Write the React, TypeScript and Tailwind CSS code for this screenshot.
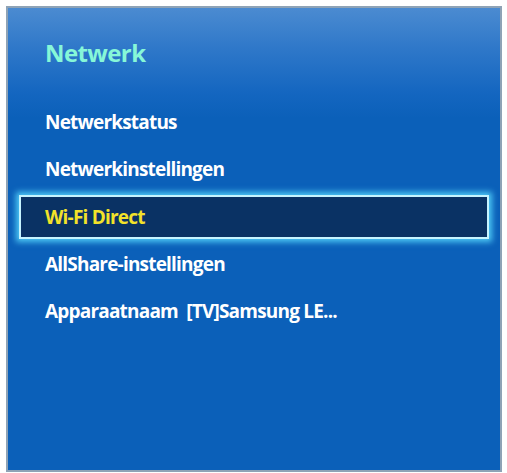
import React from "react";

const items = [
  "Netwerkstatus",
  "Netwerkinstellingen",
  "Wi-Fi Direct",
  "AllShare-instellingen",
  "Apparaatnaam  [TV]Samsung LE...",
];

export default function App() {
  return (
    <div className="w-[507px] h-[473px] bg-white pt-[6px] pl-[6px] overflow-hidden" style={{ fontFamily: '"Open Sans", "Noto Sans", sans-serif' }}>
      <div className="w-[496px] h-[466px] border-2 border-[#8fa3b6] bg-[linear-gradient(to_bottom,#4b8bd1_0px,#2f78c9_40px,#1466c0_85px,#0b60b9_110px,#0b60b9_100%)] flex flex-col">
        <div className="pl-[37px] pt-[33px] h-[91px] text-[24px] font-bold text-[#86f7d8] tracking-[-0.6px] leading-none">
          Netwerk
        </div>
        <div className="flex flex-col px-[11px]">
          {items.map((t, i) =>
            i === 2 ? (
              <div
                key={t}
                className="h-[44px] my-[2px] flex items-center pl-[24px] bg-[#0a3264] border-2 border-[#c6f4ff] shadow-[0_0_6px_3px_rgba(90,220,255,0.85)] text-[#f2e22a] text-[19px] font-bold tracking-[-0.8px] whitespace-pre"
              >
                {t}
              </div>
            ) : (
              <div
                key={t}
                className="h-[47px] flex items-center pl-[26px] text-white text-[19px] font-bold tracking-[-0.8px] whitespace-pre"
              >
                {t}
              </div>
            )
          )}
        </div>
      </div>
    </div>
  );
}
